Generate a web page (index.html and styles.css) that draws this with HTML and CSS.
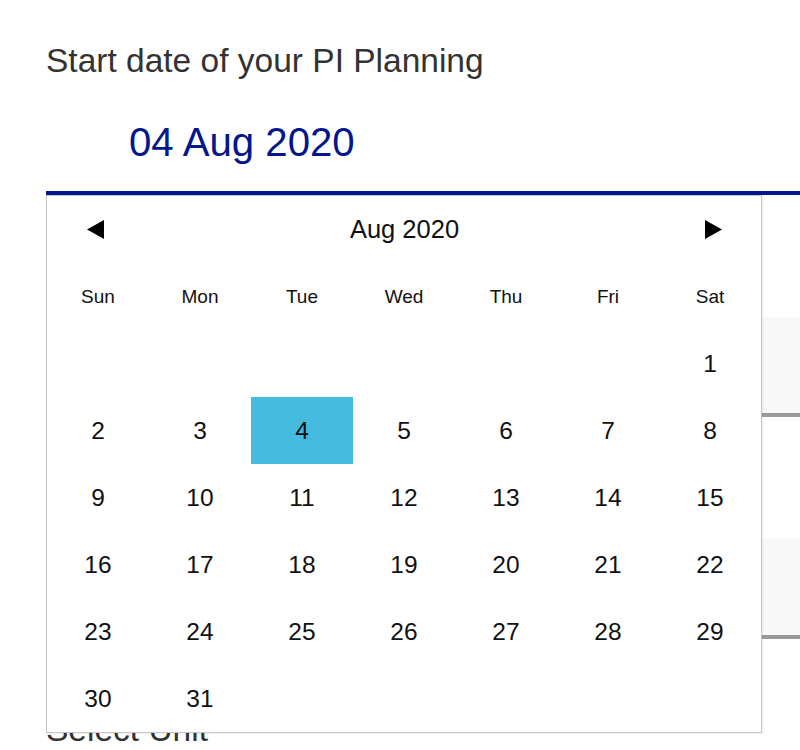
FILE: index.html
```html
<!DOCTYPE html>
<html lang="en">
<head>
<meta charset="utf-8">
<title>PI Planning</title>
<link rel="stylesheet" href="styles.css">
</head>
<body>
<main class="form">
  <div class="field-label title">Start date of your PI Planning</div>
  <div class="date-field">
    <div class="date-input">04 Aug 2020</div>
    <div class="picker">
      <div class="picker-head">
        <svg class="arrow" width="17" height="19" viewBox="0 0 17 19"><polygon points="17,0 17,19 0,9.5" fill="#000"/></svg>
        <span class="month">Aug 2020</span>
        <svg class="arrow" width="17" height="19" viewBox="0 0 17 19"><polygon points="0,0 0,19 17,9.5" fill="#000"/></svg>
      </div>
      <div class="grid">
        <div class="dow">Sun</div><div class="dow">Mon</div><div class="dow">Tue</div><div class="dow">Wed</div><div class="dow">Thu</div><div class="dow">Fri</div><div class="dow">Sat</div>
        <div class="day empty"></div><div class="day empty"></div><div class="day empty"></div><div class="day empty"></div><div class="day empty"></div><div class="day empty"></div><div class="day">1</div>
        <div class="day">2</div><div class="day">3</div><div class="day selected">4</div><div class="day">5</div><div class="day">6</div><div class="day">7</div><div class="day">8</div>
        <div class="day">9</div><div class="day">10</div><div class="day">11</div><div class="day">12</div><div class="day">13</div><div class="day">14</div><div class="day">15</div>
        <div class="day">16</div><div class="day">17</div><div class="day">18</div><div class="day">19</div><div class="day">20</div><div class="day">21</div><div class="day">22</div>
        <div class="day">23</div><div class="day">24</div><div class="day">25</div><div class="day">26</div><div class="day">27</div><div class="day">28</div><div class="day">29</div>
        <div class="day">30</div><div class="day">31</div>
      </div>
    </div>
  </div>
  <div class="select-box first"></div>
  <div class="select-box"></div>
  <div class="field-label unit">Select Unit</div>
</main>
</body>
</html>
```

FILE: styles.css
```css
html, body {
  margin: 0;
  padding: 0;
  background: #fff;
  overflow: hidden;
}
body {
  font-family: "Liberation Sans", Arial, Helvetica, sans-serif;
  width: 800px;
  height: 750px;
}
.form {
  padding-left: 46px;
  height: 750px;
  box-sizing: border-box;
  overflow: hidden;
}
.field-label {
  font-size: 33.5px;
  line-height: 34px;
  color: #333;
  white-space: nowrap;
}
.title {
  margin-top: 44px;
}
.date-field {
  position: relative;
}
.date-input {
  padding: 45px 0 28px 83px;
  font-size: 40.2px;
  line-height: 40px;
  color: #03168c;
  border-bottom: 4px solid #03168c;
}
.picker {
  position: absolute;
  top: 100%;
  left: 0;
  width: 714px;
  background: #fff;
  border: 1px solid #c6c6c6;
  box-shadow: 1px 1px 2px rgba(0, 0, 0, 0.08);
  z-index: 2;
}
.picker-head {
  height: 67px;
  padding: 0 39px 0 40px;
  display: flex;
  align-items: center;
  justify-content: space-between;
}
.arrow {
  display: block;
}
.month {
  font-size: 25.5px;
  color: #111;
}
.grid {
  display: grid;
  grid-template-columns: repeat(7, 102px);
  grid-auto-rows: 67px;
}
.dow, .day {
  display: flex;
  align-items: center;
  justify-content: center;
  color: #111;
}
.dow {
  font-size: 19px;
}
.day {
  font-size: 24.5px;
}
.selected {
  background: #45bcdf;
}
.select-box {
  margin-top: 122px;
  height: 96px;
  background: #f8f8f8;
  border-bottom: 4px solid #9a9a9a;
}
.unit {
  margin-top: 74px;
}
```
